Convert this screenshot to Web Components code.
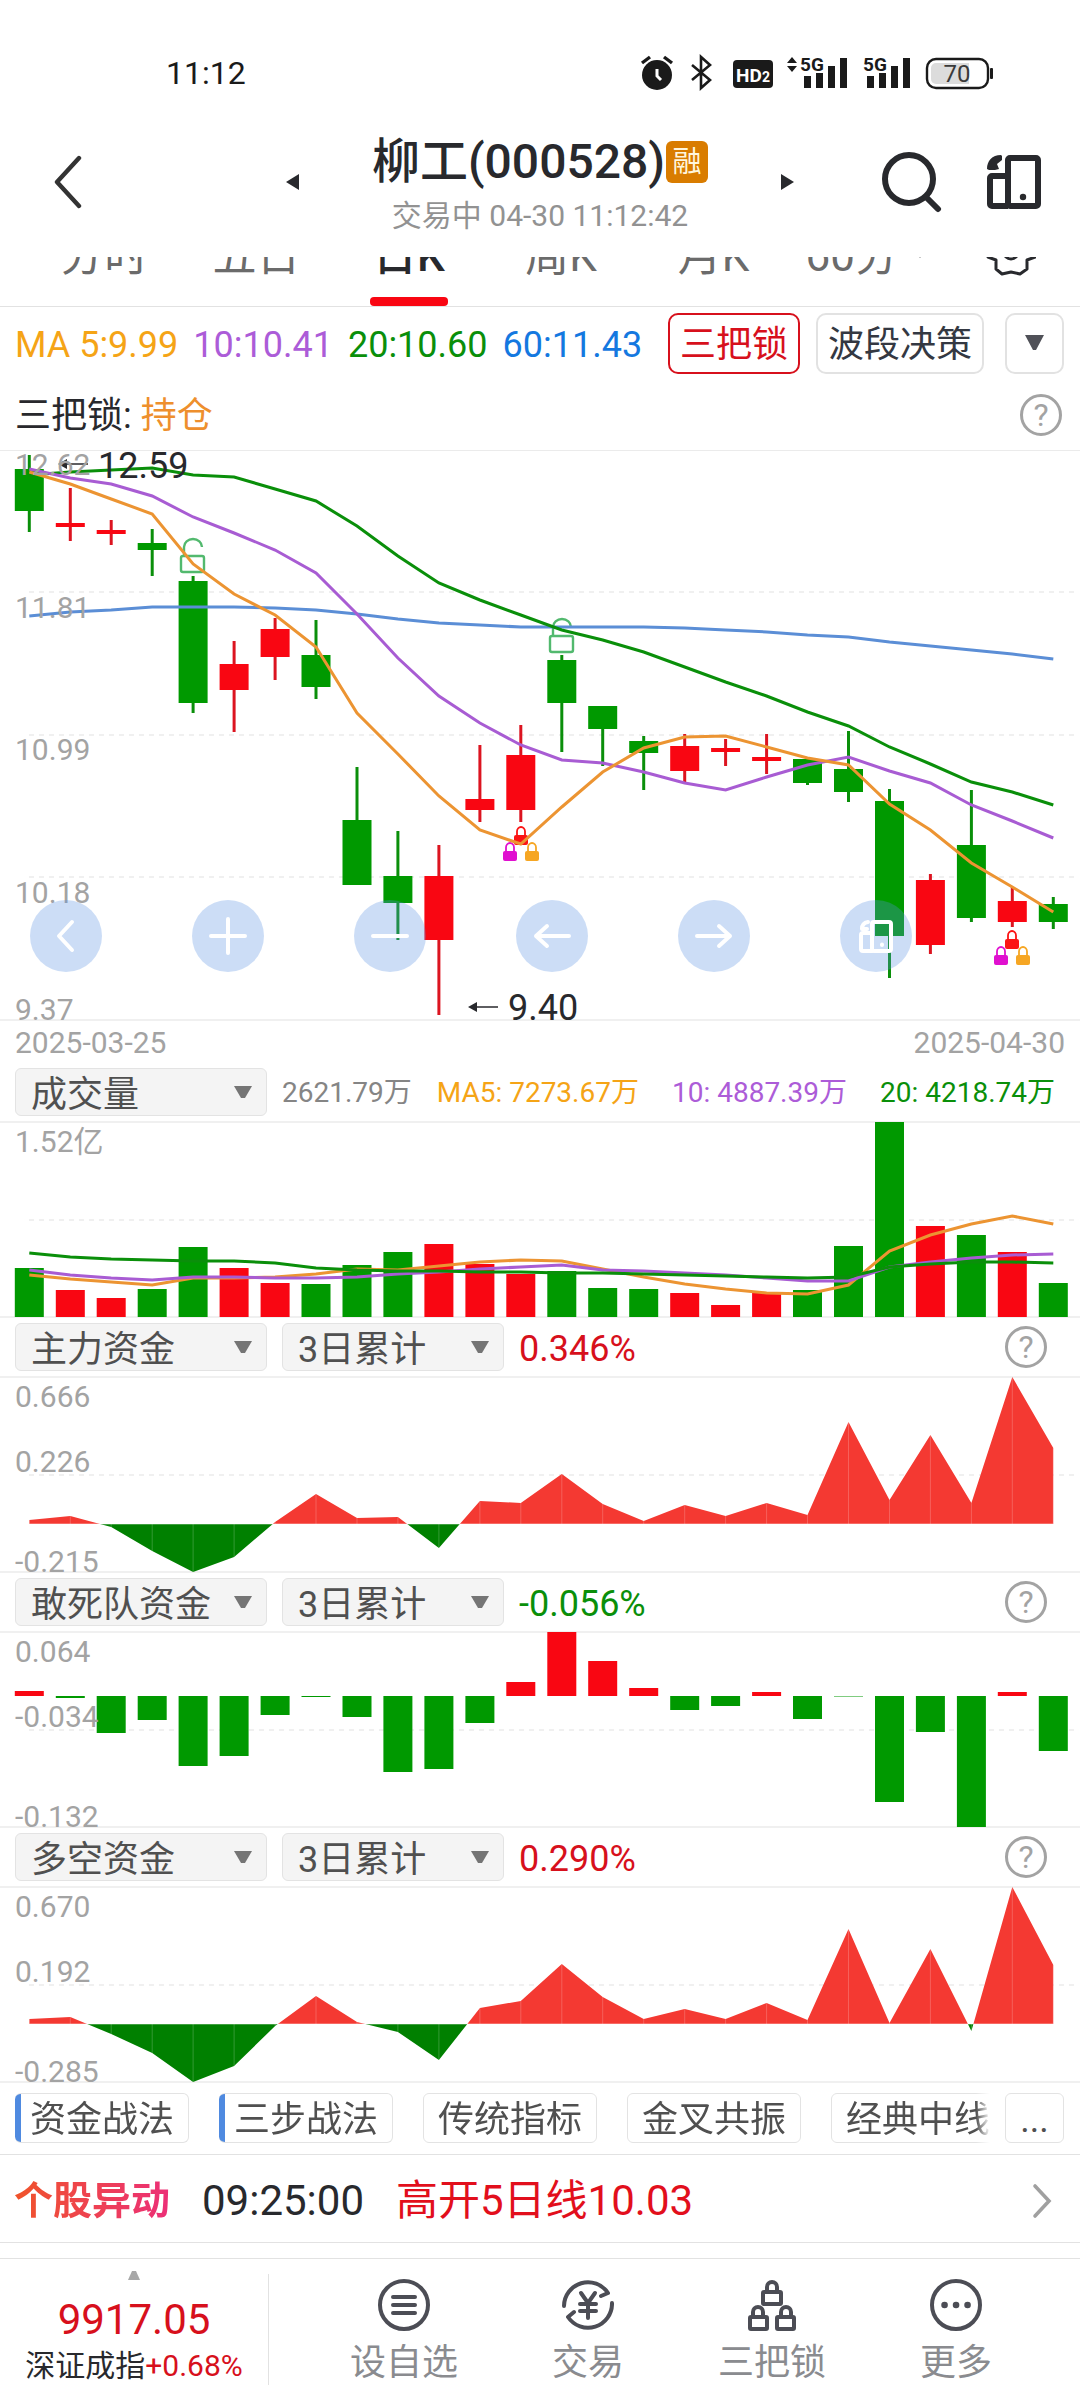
<!DOCTYPE html>
<html lang="zh-CN">
<head>
<meta charset="utf-8">
<meta name="viewport" content="width=device-width, initial-scale=1">
<title>柳工(000528)</title>
<style>
  body {
    margin: 0;
    background: #fff;
    color: #28292d;
    font-family: Roboto, "Noto Sans CJK SC", sans-serif;
    --up: #d7101c;
    --down: #0a8f0a;
    --gray: #a3a3a3;
    --line: #e2e2e2;
  }
</style>
</head>
<body>
<stock-page></stock-page>

<script>
const BASE = `
  *, *::before, *::after { box-sizing: border-box; }
  :host { display: block; }
  button, select, a { font: inherit; color: inherit; }
  button { background: none; border: 0; padding: 0; margin: 0; cursor: pointer; }
  a { text-decoration: none; }
  svg { display: block; flex: none; }
`;

function define(name, css, html, setup) {
  customElements.define(name, class extends HTMLElement {
    connectedCallback() {
      if (this.shadowRoot) return;
      const root = this.attachShadow({ mode: 'open' });
      const body = typeof html === 'function' ? html(this) : html;
      root.innerHTML = `<style>${BASE}${css}</style>${body}`;
      if (setup) setup(this, root);
    }
  });
}

/* ---------- chart helpers ---------- */
const COUNT = 26;
const cx = i => Math.round((29.3 + 40.96 * i) * 10) / 10;
const line = (ys, color) =>
  `<polyline points="${ys.map((y, i) => cx(i) + ',' + y).join(' ')}" fill="none" stroke="${color}" stroke-width="3"/>`;
const RED = '#f90612', GREEN = '#009900';
const grid = (y) => `<path d="M29 ${y}H1076" stroke="#f0f0f0" stroke-width="2" stroke-dasharray="5 5"/>`;

/* ---------- status bar ---------- */
define('status-bar', `
  :host { padding: 50px 86px 0 166px; }
  .row { display: flex; align-items: center; justify-content: space-between; height: 46px; font-size: 32px; line-height: 46px; color: #1a1a1a; }
  .icons { display: flex; align-items: center; }
`, `
  <div class="row">
    <span>11:12</span>
    <div class="icons">
      <svg width="354" height="40" viewBox="640 52 354 40" fill="#1a1a1a">
        <circle cx="657" cy="74" r="15"/>
        <path d="M642 62l8-6M672 62l-8-6" stroke="#1a1a1a" stroke-width="3.4"/>
        <path d="M657 68v7l4 4" fill="none" stroke="#fff" stroke-width="3"/>
        <path d="M692 64l18 15-9 8V56l9 8-18 15" fill="none" stroke="#1a1a1a" stroke-width="2.6"/>
        <rect x="733" y="59" width="40" height="28" rx="4"/>
        <text x="736" y="81" font-size="19" font-weight="700" fill="#fff">HD</text>
        <text x="762" y="81" font-size="14" font-weight="700" fill="#fff">2</text>
        <path d="M787 62l5-6 5 6zM787 65l5 6 5-6z"/>
        <text x="800" y="70" font-size="19" font-weight="700">5G</text>
        <path d="M804 75h7v12h-7zM816 72h7v15h-7zM828 65h7v22h-7zM840 57h7v30h-7z"/>
        <text x="863" y="70" font-size="19" font-weight="700">5G</text>
        <path d="M867 75h7v12h-7zM879 72h7v15h-7zM891 65h7v22h-7zM903 57h7v30h-7z"/>
        <rect x="927" y="58" width="61" height="29" rx="9" fill="#fff" stroke="#1a1a1a" stroke-width="2.4"/>
        <path d="M969 62v21h-33a5 5 0 0 1-5-5V67a5 5 0 0 1 5-5z" fill="#dcdcdc"/>
        <rect x="990" y="67" width="3" height="11" rx="1"/>
        <text x="957" y="81" font-size="24" font-weight="400" fill="#3a3a3a" text-anchor="middle">70</text>
      </svg>
    </div>
  </div>
`);

/* ---------- title bar ---------- */
define('quote-header', `
  :host { display: grid; grid-template-columns: 1fr 508px 1fr; align-items: center; height: 161px; padding-top: 11px; }
  .back { justify-self: start; margin-left: 52px; }
  .mid { display: flex; align-items: center; justify-content: space-between; }
  .name { display: flex; flex-direction: column; align-items: center; gap: 6px; padding-top: 8px; }
  h1 { margin: 0; display: flex; align-items: center; gap: 1px; font-size: 48px; line-height: 54px; font-weight: 500; }
  h1 b { width: 42px; height: 42px; border-radius: 6px; background: #d97c00; color: #fff6dd; font-size: 29px; line-height: 42px; font-weight: 400; text-align: center; }
  .time { font-size: 30px; line-height: 42px; color: #929292; }
  .right { display: flex; justify-content: flex-end; align-items: center; gap: 44px; padding-right: 38px; }
`, `
  <button class="back" aria-label="返回"><svg width="32" height="54" viewBox="0 0 32 54"><path d="M27 3L5 27l22 24" fill="none" stroke="#333" stroke-width="4.4" stroke-linecap="round" stroke-linejoin="round"/></svg></button>
  <div class="mid">
    <button aria-label="上一只"><svg width="13" height="16" viewBox="0 0 13 16"><path d="M13 0v16L0 8z" fill="#28292d"/></svg></button>
    <div class="name">
      <h1><span>柳工(000528)</span><b>融</b></h1>
      <div class="time">交易中 04-30 11:12:42</div>
    </div>
    <button aria-label="下一只"><svg width="13" height="16" viewBox="0 0 13 16"><path d="M0 0v16l13-8z" fill="#28292d"/></svg></button>
  </div>
  <div class="right">
    <button aria-label="搜索"><svg width="61" height="62" viewBox="0 0 61 62"><g fill="none" stroke="#28292d" stroke-width="6"><circle cx="27" cy="28" r="24"/><path d="M44 46l12 12" stroke-linecap="round"/></g></svg></button>
    <button aria-label="横屏"><svg width="55" height="54" viewBox="0 0 55 54">
      <g fill="none" stroke="#28292d" stroke-width="6" stroke-linejoin="round"><rect x="21" y="3" width="30" height="48" rx="2"/><path d="M21 21H5a2 2 0 0 0-2 2v26a2 2 0 0 0 2 2h16"/></g>
      <circle cx="36" cy="42" r="3.2" fill="#28292d"/><path d="M0 14C0 6 5 0 14 0l1 1v4l-5 4 2 5-4 1H2z" fill="#28292d"/></svg></button>
  </div>
`);

/* ---------- period tabs, partly scrolled under the title bar ---------- */
define('period-tabs', `
  :host { border-bottom: 1px solid var(--line); height: 50px; overflow: hidden; }
  nav { display: grid; grid-template-columns: repeat(6, 1fr) 138px; grid-template-rows: 49px; padding-left: 28px; align-items: end; justify-items: center; }
  button { display: flex; flex-direction: column; align-items: center; gap: 11px; font-size: 44px; line-height: 60px; color: #6b6b6b; white-space: nowrap; }
  button::after { content: ""; width: 78px; height: 9px; border-radius: 4px; }
  button[aria-current] { color: #28292d; font-weight: 500; }
  button[aria-current]::after { background: #f90612; }
  .more svg { display: inline; vertical-align: 13px; margin-left: 15px; }
  .gear { gap: 21px; }
`, `
  <nav>
    <button>分时</button><button>五日</button><button aria-current="page">日K</button>
    <button>周K</button><button>月K</button>
    <button class="more"><span>60分<svg width="12" height="8" viewBox="0 0 12 8"><path d="M0 0h12L6 8z" fill="#6b6b6b"/></svg></span></button>
    <button class="gear" aria-label="设置"><svg width="50" height="44" viewBox="987 232 50 44">
      <g fill="none" stroke="#28292d" stroke-width="3" stroke-linejoin="round">
      <path d="M1012 230l8-3 7 6v9l10 8-1 7-8 3v9l-7 5-9-2-9 2-6-5v-9l-8-3-1-7 9-8v-9l7-6z"/><circle cx="1012" cy="252" r="7"/></g></svg></button>
  </nav>
`);

/* ---------- moving average legend ---------- */
define('ma-legend', `
  :host { display: flex; align-items: center; justify-content: space-between; height: 72px; padding: 0 16px 0 15px; font-size: 36px; line-height: 44px; white-space: nowrap; }
  .ma { display: flex; gap: 15px; padding-top: 3px; }
  .act { display: flex; gap: 16px; }
  .act button { height: 61px; padding: 3px 10px 0; border: 2px solid var(--line); border-radius: 10px; color: #343842; }
  .act .on { border-color: var(--up); color: var(--up); }
  .act .drop { width: 59px; padding: 0; margin-left: 5px; display: flex; align-items: center; justify-content: center; }
`, `
  <div class="ma">
    <span style="color:#f5a416">MA 5:9.99</span><span style="color:#ac5cd8">10:10.41</span>
    <span style="color:#0a8f0a">20:10.60</span><span style="color:#1478e0">60:11.43</span>
  </div>
  <div class="act">
    <button class="on">三把锁</button><button>波段决策</button>
    <button class="drop" aria-label="展开"><svg width="21" height="16" viewBox="0 0 21 16"><path d="M1 0h19L12 15h-3z" fill="#505158"/></svg></button>
  </div>
`);

define('help-button', `
  button { display: block; width: 42px; height: 42px; border: 3px solid var(--gray); border-radius: 50%; color: var(--gray); font-size: 32px; line-height: 36px; text-align: center; }
`, `<button aria-label="说明">?</button>`);

define('lock-signal', `
  :host { display: flex; align-items: center; justify-content: space-between; height: 71px; padding: 0 18px 0 15px; font-size: 36px; line-height: 44px; }
  span { padding-top: 3px; }
  em { font-style: normal; color: #ee8f2d; }
`, `<span>三把锁: <em>持仓</em></span><help-button></help-button>`);

/* ---------- candlestick chart; y counted from the chart's top edge ---------- */
/* [up?, high, body top, body bottom, low] */
const CANDLES = [
  [0,5,19,61,82],[1,38,73,77,91],[1,70,80,84,95],[0,79,93,100,126],[0,126,131,253,263],
  [1,191,214,240,282],[1,168,179,207,230],[0,170,205,237,249],[0,317,370,435,435],[0,381,426,453,490],
  [1,395,426,490,565],[1,295,349,360,372],[1,275,305,360,372],[0,205,210,253,302],[0,256,256,279,316],
  [0,286,291,303,340],[1,284,296,321,332],[1,289,298,302,316],[1,284,307,311,324],[0,309,309,333,335],
  [0,281,319,342,352],[0,339,351,486,528],[1,424,430,495,504],[0,340,395,468,472],[1,437,451,472,477],
  [0,447,454,472,479]
];
const K5 = [22,34,49,64,114,144,165,197,263,304,346,380,394,357,322,298,287,286,297,308,315,354,380,413,437,462];
const K10 = [19,28,34,46,67,83,100,123,164,208,246,273,295,310,313,322,333,340,327,315,307,321,333,355,371,388];
const K20 = [25,22,20,18,25,27,39,51,76,106,133,150,165,180,190,202,217,232,246,262,276,297,314,332,342,355];
const K60 = [166,162,160,157,157,157,158,160,164,169,173,175,177,177,177,177,178,180,182,185,187,192,196,200,204,209];

const lock = (x, y, c) => `<g transform="translate(${x} ${y})">
  <path d="M3 10V5.500a4 4.500 0 0 1 8 0V10" fill="none" stroke="${c}" stroke-width="1.8"/><rect y="9" width="14" height="10" rx="2" fill="${c}"/></g>`;
const locks = (x, y) => lock(x - 7, y, '#fb1414') + lock(x - 18, y + 16, '#e010cf') + lock(x + 4, y + 16, '#f6a623');
const openLock = (x, y) => `<g fill="none" stroke="#52b96e" stroke-width="2.4">
  <rect x="${x - 12}" y="${y + 18}" width="23" height="16" rx="2"/><path d="M${x - 9} ${y + 18}V${y + 9}a9 8 0 0 1 18 0"/></g>`;
const arrow = (x, y) => `<path d="M${x} ${y}l9-5v10z" fill="#28292d"/><path d="M${x + 8} ${y}h22" stroke="#28292d" stroke-width="1.5"/>`;

const TOOLS = [
  ['收起', '<path d="M42 22L29 36l13 14"/>'],
  ['放大', '<path d="M19 36h34M36 19v34"/>'],
  ['缩小', '<path d="M19 36h34"/>'],
  ['左移', '<path d="M53 36H20M31 26L20 36l11 10"/>'],
  ['右移', '<path d="M19 36h33M41 26l11 10-11 10"/>'],
  ['横屏', '<rect x="32" y="22" width="19" height="29" rx="2"/><path d="M32 33H23a2 2 0 0 0-2 2v14a2 2 0 0 0 2 2h9M22 29q0-6 6-7M22 29h5"/><path d="M42 44.500v.5"/>']
];

define('kline-chart', `
  :host { position: relative; height: 570px; }
  .plot { width: 100%; height: 570px; overflow: visible; }
  .y { position: absolute; left: 15px; font-size: 30px; line-height: 30px; color: var(--gray); }
  .tools { position: absolute; left: 30px; right: 168px; bottom: 48px; display: flex; justify-content: space-between; }
  .tools button { width: 72px; height: 72px; border-radius: 50%; background: rgba(90,145,226,.31); }
  .tools g { fill: none; stroke: #fff; stroke-width: 4; stroke-linecap: round; stroke-linejoin: round; }
`, () => `
  <svg class="plot" viewBox="0 0 1080 570" preserveAspectRatio="none">
    <path d="M0 .5H1080" stroke="#ebebeb"/><path d="M0 570H1080" stroke="#f0f0f0" stroke-width="2"/>
    ${grid(142)}${grid(285)}${grid(427)}
    ${CANDLES.map(([up, h, t, b, l], i) => {
      const c = up ? RED : GREEN;
      return `<path d="M${cx(i)} ${h}V${l}" stroke="${up ? '#dc1420' : '#0a8f0a'}" stroke-width="3"/><rect x="${cx(i) - 14.5}" y="${t}" width="29" height="${b - t}" fill="${c}"/>`;
    }).join('')}
    ${openLock(193, 88)}${openLock(562, 168)}
    ${locks(521, 376)}${locks(1012, 480)}
    ${line(K60, '#5b8ed6')}${line(K20, '#0a8f0a')}${line(K10, '#a85cd3')}${line(K5, '#ec9432')}
    ${arrow(58, 14)}<text x="98" y="28" font-size="36" fill="#28292d">12.59</text>
    ${arrow(468, 557)}<text x="508" y="570" font-size="36" fill="#28292d">9.40</text>
  </svg>
  <span class="y" style="top:0">12.62</span><span class="y" style="top:143px">11.81</span>
  <span class="y" style="top:285px">10.99</span><span class="y" style="top:428px">10.18</span>
  <span class="y" style="top:545px">9.37</span>
  <div class="tools">${TOOLS.map(([n, d]) => `<button aria-label="${n}"><svg width="72" height="72" viewBox="0 0 72 72"><g>${d}</g></svg></button>`).join('')}</div>
`);

define('date-range', `
  :host { display: flex; justify-content: space-between; height: 42px; padding: 8px 15px 0; font-size: 30px; line-height: 30px; color: var(--gray); }
`, `<time>2025-03-25</time><time>2025-04-30</time>`);

/* ---------- indicator drop-down ---------- */
define('pick-box', `
  label { display: grid; align-items: center; }
  label > * { grid-area: 1 / 1; }
  select { appearance: none; width: 100%; height: 48px; padding: 4px 15px 0; border: 1px solid #e3e3e3; border-radius: 6px; background: #f4f4f4; color: #505050; font-size: 36px; line-height: 44px; }
  svg { justify-self: end; margin-right: 15px; pointer-events: none; }
`, el => `<label><select aria-label="${el.getAttribute('name')}"><option>${el.getAttribute('value')}</option></select>
  <svg width="18" height="13" viewBox="0 0 18 13"><path d="M0 0h18l-7 12H7z" fill="#757575"/></svg></label>`);

define('indicator-head', `
  :host { display: flex; align-items: center; height: 60px; padding: 0 33px 0 15px; gap: 15px; white-space: nowrap; }
  pick-box:nth-of-type(1) { width: 252px; }
  pick-box:nth-of-type(2) { width: 222px; }
  .v { padding-top: 4px; font-size: 36px; line-height: 44px; color: var(--up); }
  .v.neg { color: var(--down); }
  help-button { margin-left: auto; }
`, el => {
  const v = el.getAttribute('value');
  return `<pick-box name="指标" value="${el.getAttribute('indicator')}"></pick-box>
  <pick-box name="周期" value="3日累计"></pick-box>
  <span class="v${v[0] === '-' ? ' neg' : ''}">${v}</span><help-button></help-button>`;
});

define('volume-head', `
  :host { display: flex; align-items: center; height: 60px; padding: 0 25px 0 15px; gap: 15px; font-size: 28px; line-height: 36px; white-space: nowrap; }
  pick-box { width: 252px; }
  span { padding-top: 2px; }
  .ma { margin-left: auto; display: flex; gap: 33px; }
`, `
  <pick-box name="指标" value="成交量"></pick-box>
  <span style="color:#858585">2621.79万</span>
  <div class="ma"><span style="color:#f5a416">MA5: 7273.67万</span><span style="color:#ac5cd8">10: 4887.39万</span><span style="color:#0a8f0a">20: 4218.74万</span></div>
`);

/* ---------- indicator plots, 195 high ---------- */
const PLOT_CSS = `
  :host { position: relative; height: 195px; }
  .plot { width: 100%; height: 195px; overflow: visible; }
  .y { position: absolute; left: 15px; font-size: 30px; line-height: 30px; color: var(--gray); }
  .y:nth-of-type(1) { top: 5px; }
  .y:nth-of-type(2) { top: 70px; }
  .y:nth-of-type(3) { bottom: -5px; }
`;
const plot = (inner, labels) => `
  <svg class="plot" viewBox="0 0 1080 195" preserveAspectRatio="none">
    <path d="M0 0H1080M0 195H1080" stroke="#f0f0f0" stroke-width="2"/>${grid(98)}${inner}
  </svg>${labels.map(t => `<span class="y">${t}</span>`).join('')}`;

const UPS = [0,1,1,0,0,1,1,0,0,0,1,1,1,0,0,0,1,1,1,0,0,0,1,0,1,0];
const VOL = [146,168,176,167,125,146,161,162,143,130,122,142,152,149,166,167,171,183,170,168,124,0,104,113,130,161];
const V5 = [153,157,160,163,156,156,155,152,147,148,144,140,138,139,147,155,162,167,171,172,163,129,113,102,94,102];
const V10 = [148,153,156,158,155,155,156,156,155,152,150,147,145,143,148,149,151,153,156,159,159,145,140,136,133,132];
const V20 = [131,135,137,138,139,139,141,146,148,149,149,150,150,151,151,152,153,154,155,156,155,145,142,140,140,141];
define('volume-plot', PLOT_CSS, () => plot(
  VOL.map((y, i) => `<rect x="${cx(i) - 14.5}" y="${y}" width="29" height="${195 - y}" fill="${UPS[i] ? RED : GREEN}"/>`).join('')
  + line(V5, '#ec9432') + line(V10, '#a85cd3') + line(V20, '#0a8f0a'), ['1.52亿']));

const SQUAD = [59,66,101,88,134,124,83,65,85,140,137,91,50,0,29,56,78,74,60,87,64.5,170,100,195,60,119];
define('squad-plot', PLOT_CSS, () => plot(
  SQUAD.map((y, i) => `<rect x="${cx(i) - 14.5}" y="${Math.min(y, 64)}" width="29" height="${Math.abs(y - 64)}" fill="${y < 64 ? RED : GREEN}"/>`).join(''),
  ['0.064', '-0.034', '-0.132']));

/* area split at its zero line: red above, green below */
function area(ys, zero) {
  const pts = [];
  ys.forEach((y, i) => {
    if (i) {
      const p = ys[i - 1];
      if ((p - zero) * (y - zero) < 0) {
        const k = (zero - p) / (y - p);
        pts.push([cx(i - 1) + k * (cx(i) - cx(i - 1)), zero]);
      }
    }
    pts.push([cx(i), y]);
  });
  const shape = (pick, color) => `<polygon fill="${color}" points="${cx(0)},${zero} ${pts.map(([x, y]) => x.toFixed(1) + ',' + pick(y, zero)).join(' ')} ${cx(COUNT - 1)},${zero}"/>`;
  return shape(Math.min, '#f43932') + shape(Math.max, '#008000')
    + ys.map((y, i) => `<path d="M${cx(i)} ${y}V${zero}" stroke="#fff" stroke-opacity=".2"/>`).join('')
    + `<path d="M${cx(0)} ${zero}H${cx(COUNT - 1)}" stroke="#fff" stroke-opacity=".5"/>`;
}
const AREAS = {
  main: { zero: 147, labels: ['0.666', '0.226', '-0.215'],
    ys: [143,139,150,174,195,180,145,117,141,140,171,124,126,97,127,144,128,139,126,138,45,123,58,126,0,71] },
  both: { zero: 137, labels: ['0.670', '0.192', '-0.285'],
    ys: [132,130,147,166,195,179,139,109,135,145,173,121,114,77,110,132,122,132,116,133,42,136,62,144,0,78] }
};
define('fund-plot', PLOT_CSS, el => {
  const a = AREAS[el.getAttribute('series')];
  return plot(area(a.ys, a.zero), a.labels);
});

/* ---------- strategy tags ---------- */
define('tag-bar', `
  :host { display: flex; align-items: center; gap: 15px; height: 73px; padding: 0 16px 0 15px; border-bottom: 1px solid var(--line); font-size: 36px; line-height: 44px; color: #505050; white-space: nowrap; }
  .list { flex: 1; min-width: 0; display: flex; gap: 30px; overflow: hidden; mask-image: linear-gradient(to left, transparent, #000 14px); }
  button { flex: none; height: 50px; padding: 4px 14px 0; border: 1px solid #e3e3e3; border-radius: 6px; }
  .hot { border-left: 0; padding-left: 15px; background: linear-gradient(90deg, #4f8ae0 6px, transparent 6px); }
  .all { width: 59px; padding: 4px 0 0; text-align: center; }
`, `
  <div class="list"><button class="hot">资金战法</button><button class="hot">三步战法</button><button>传统指标</button><button>金叉共振</button><button>经典中线</button></div>
  <button class="all" aria-label="更多战法">...</button>
`);

define('alert-row', `
  a { display: flex; align-items: center; height: 88px; padding: 5px 28px 0 14px; border-bottom: 1px solid var(--line); font-size: 42px; line-height: 52px; white-space: nowrap; }
  b { font-size: 39px; font-weight: 700; background: linear-gradient(90deg, #f0542a, #ec2f78); -webkit-background-clip: text; background-clip: text; color: transparent; }
  time { margin: 0 32px; }
  em { font-style: normal; color: #e20f1c; }
  svg { margin-left: auto; }
`, `<a href="#alerts"><b>个股异动</b><time>09:25:00</time><em>高开5日线10.03</em>
  <svg width="20" height="36" viewBox="0 0 20 36"><path d="M3 3l14 15L3 33" fill="none" stroke="#a0a0a0" stroke-width="3.6" stroke-linecap="round"/></svg></a>`);

/* ---------- bottom bar ---------- */
const NAV = [
  ['设自选', '<circle cx="26" cy="26" r="24"/><path d="M15 18h22M15 26h22M15 34h22"/>'],
  ['交易', '<path d="M2 27A24 24 0 0 1 46 14l-7 3M50 24A24 24 0 0 1 6 38l6-5"/><path d="M19 14l7 10 7-10M26 24v15M18 25h16M18 32h16"/>'],
  ['三把锁', '<rect x="17" y="13" width="18" height="12" rx="1"/><path d="M21 13V8a5 5 0 0 1 10 0v5"/><rect x="4" y="38" width="17" height="12" rx="1"/><path d="M7 38v-5a5 5 0 0 1 10 0v5"/><rect x="31" y="38" width="17" height="12" rx="1"/><path d="M35 38v-5a5 5 0 0 1 10 0v5"/>'],
  ['更多', '<circle cx="26" cy="26" r="24"/><path d="M14.500 26h.1M26 26h.1M37.500 26h.1" stroke-width="6.500"/>']
];
define('bottom-bar', `
  :host { display: flex; height: 142px; margin-top: 15px; border-top: 1px solid var(--line); }
  .index { display: flex; flex-direction: column; align-items: center; width: 268px; padding-top: 12px; white-space: nowrap; }
  .price { margin-top: 16px; font-size: 42px; line-height: 48px; color: var(--up); }
  .name { margin-top: 4px; font-size: 30px; line-height: 36px; }
  .name em { font-style: normal; color: var(--up); }
  nav { flex: 1; display: flex; gap: 94px; padding: 20px 0 0 82px; position: relative; }
  nav::before { content: ""; position: absolute; left: 0; top: 15px; bottom: 15px; width: 1px; background: var(--line); }
  nav a { display: flex; flex-direction: column; align-items: center; gap: 10px; font-size: 36px; line-height: 44px; color: #8a8b8f; white-space: nowrap; }
  nav g { fill: none; stroke: #4c4d55; stroke-width: 4; stroke-linecap: round; stroke-linejoin: round; }
`, `
  <div class="index">
    <svg width="12" height="9" viewBox="0 0 12 9"><path d="M0 9h12L8 0H4z" fill="#a8a8a8"/></svg>
    <div class="price">9917.05</div><div class="name">深证成指<em>+0.68%</em></div>
  </div>
  <nav>${NAV.map(([t, d]) => `<a href="#nav"><svg width="52" height="52" viewBox="0 0 52 52"><g>${d}</g></svg><span>${t}</span></a>`).join('')}</nav>
`);

define('stock-page', '', `
  <status-bar></status-bar>
  <quote-header></quote-header>
  <period-tabs></period-tabs>
  <ma-legend></ma-legend>
  <lock-signal></lock-signal>
  <kline-chart></kline-chart>
  <date-range></date-range>
  <volume-head></volume-head>
  <volume-plot></volume-plot>
  <indicator-head indicator="主力资金" value="0.346%"></indicator-head>
  <fund-plot series="main"></fund-plot>
  <indicator-head indicator="敢死队资金" value="-0.056%"></indicator-head>
  <squad-plot></squad-plot>
  <indicator-head indicator="多空资金" value="0.290%"></indicator-head>
  <fund-plot series="both"></fund-plot>
  <tag-bar></tag-bar>
  <alert-row></alert-row>
  <bottom-bar></bottom-bar>
`);
</script>
</body>
</html>
